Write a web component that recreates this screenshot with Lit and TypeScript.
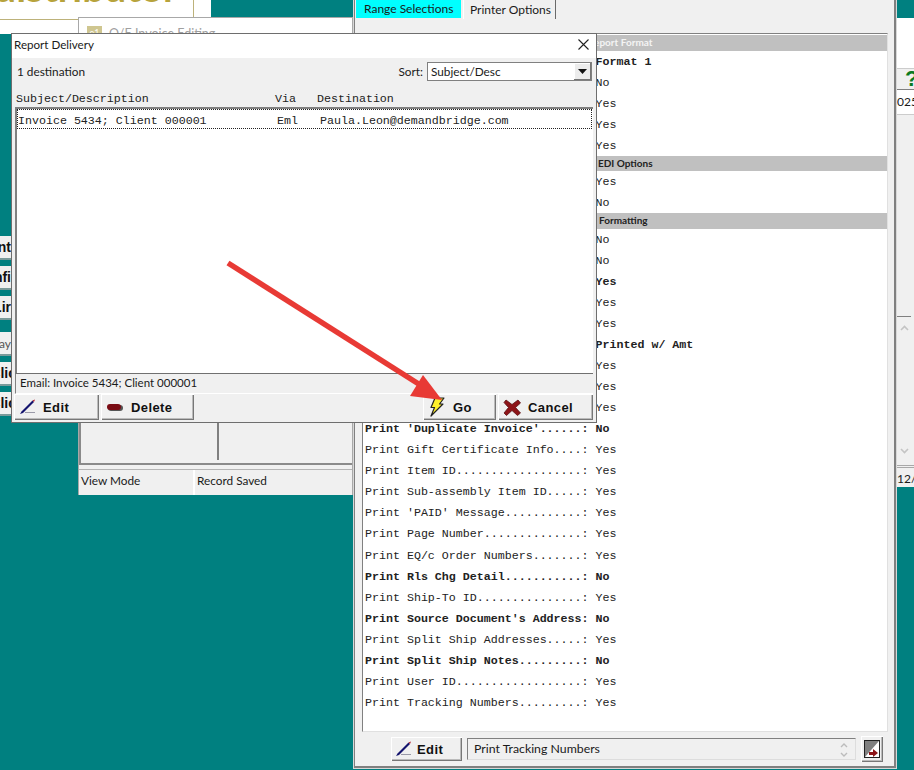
import { LitElement, html, css, svg } from "lit";
import { customElement } from "lit/decorators.js";

const pencil = html`<svg width="20" height="18" viewBox="0 0 20 18"><path d="M1 16 L4 15 L15 4 L13.5 2.5 L2.5 13.5 Z" fill="#14146e"/><path d="M13.5 2.5 L15 4 L16 1.5 Z" fill="#b02030"/><path d="M6 14.5 H16" stroke="#9a9aa8" stroke-width="1"/></svg>`;
const pill = html`<svg width="18" height="12" viewBox="0 0 18 12"><rect x="2" y="4" width="15" height="6" rx="3" fill="#555"/><rect x="1" y="3" width="14" height="6" rx="3" fill="#7a0c14"/></svg>`;
const bolt = html`<svg width="18" height="20" viewBox="0 0 18 20"><path d="M7 1 H16 L11.5 7 H15 L3 19 L6.5 10.5 H3 Z" fill="#fff02a" stroke="#222" stroke-width="1.2" stroke-linejoin="round"/></svg>`;
const cross = html`<svg width="18" height="17" viewBox="0 0 18 17"><path d="M3 1 L9 5.5 L15 1 L17.5 4 L12.5 8.5 L17.5 14 L14.5 16.5 L9 11.5 L3.5 16.5 L1 14 L5.5 8.5 L1 3.5 Z" fill="#8d1418" stroke="#5a1012" stroke-width=".8"/></svg>`;

type Row = [string, string, boolean?] | { head: string; cls: string };
const pad = (l: string) => l + ".".repeat(Math.max(0, 31 - l.length)) + ": ";
const rows: Row[] = [
  { head: "Report Format", cls: "h1" },
  ["Report Format.", "Format 1", true],
  ["Print Company Logo", "No"],
  ["Print Remit-To Address", "Yes"],
  ["Print Contact Name", "Yes"],
  ["Print Contact Phone", "Yes"],
  { head: "EDI Options", cls: "h2" },
  ["Include EDI Invoices", "Yes"],
  ["Send Via EDI", "No"],
  { head: "Formatting", cls: "h3" },
  ["Print Alt Item ID", "No"],
  ["Print Backorder Qty", "No"],
  ["Print Bill-To ID", "Yes", true],
  ["Print Comments", "Yes"],
  ["Print Customer PO", "Yes"],
  ["Print Discount", "Printed w/ Amt", true],
  ["Print Detail Notes", "Yes"],
  ["Print Document Notes", "Yes"],
  ["Print Due Date", "Yes"],
  ["Print 'Duplicate Invoice'", "No", true],
  ["Print Gift Certificate Info", "Yes"],
  ["Print Item ID", "Yes"],
  ["Print Sub-assembly Item ID", "Yes"],
  ["Print 'PAID' Message", "Yes"],
  ["Print Page Number", "Yes"],
  ["Print EQ/c Order Numbers", "Yes"],
  ["Print Rls Chg Detail", "No", true],
  ["Print Ship-To ID", "Yes"],
  ["Print Source Document's Address", "No", true],
  ["Print Split Ship Addresses", "Yes"],
  ["Print Split Ship Notes", "No", true],
  ["Print User ID", "Yes"],
  ["Print Tracking Numbers", "Yes"],
];

@customElement("app-root")
export class AppRoot extends LitElement {
  static styles = css`
    :host { display: block; width: 914px; height: 770px; position: relative; overflow: hidden; background: #008080; font-family: "Lato", "Noto Sans", sans-serif; font-size: 11.8px; color: #1a1a1a; }
    .abs { position: absolute; box-sizing: border-box; }
    .mono { font-family: "Liberation Mono", monospace; font-size: 11.65px; color: #222; white-space: pre; }
    .logo { left: 0; top: 0; width: 211px; height: 34px; background: #fff; overflow: hidden; }
    .logo-top { width: 194px; height: 20px; box-sizing: border-box; border-right: 1px solid #bdb27a; border-bottom: 1px solid #bdb27a; display: flex; align-items: flex-end; overflow: hidden; }
    .logo-text { font-family: "Lato", sans-serif; font-size: 39px; line-height: 40px; color: #b7a33c; margin: 0 0 12px -6px; white-space: nowrap; font-weight: 700; flex: none; }
    .stubs { left: 0; top: 236px; width: 11px; display: flex; flex-direction: column; }
    .stub { height: 22px; background: #f0f0f0; border-bottom: 2px solid #7a9a9a; display: flex; justify-content: flex-end; align-items: center; overflow: hidden; font: bold 14px "Liberation Sans", sans-serif; color: #111; box-sizing: content-box; margin-bottom: 6px; white-space: nowrap; }
    .stub.plain { font: 12px "Lato", sans-serif; color: #555; margin-top: 6px; }
    .stub span { flex: none; }
    .stub.cut span { margin-right: -5px; }
    .invoice { left: 78px; top: 17px; width: 275px; height: 478px; background: #f0f0f0; border: 1px solid #a8a8a8; border-bottom: 0; display: flex; flex-direction: column; }
    .inv-title { height: 28px; background: #fff; display: flex; align-items: center; gap: 7px; padding-left: 8px; color: #a0a0a0; font-size: 12.5px; padding-top: 2px; box-sizing: border-box; }
    .inv-icon { width: 15px; height: 15px; background: #cfc690; color: #fff; font-size: 9px; text-align: center; line-height: 13px; }
    .inv-body { flex: 1; border: 1px solid #8a8a8a; border-top: 0; border-width: 0 0 2px 2px; position: relative; }
    .inv-split { margin-left: 136px; margin-top: 377px; height: 37px; width: 2px; background: #808080; }
    .inv-status { height: 25px; margin-top: 4px; border-top: 1px solid #b4b4b4; display: grid; grid-template-columns: 114px 1fr; }
    .inv-status div { padding: 3px 2px; }
    .inv-status div + div { border-left: 2px solid #fff; padding-left: 2px; }
    .side { left: 896px; top: 18px; width: 18px; height: 469px; background: #fff; display: flex; flex-direction: column; border-left: 1px solid #8a8a8a; }
    .side-top { height: 50px; }
    .side-btn { height: 22px; box-sizing: border-box; background: #f0f0f0; border-top: 1px solid #ccc; border-bottom: 1px solid #808080; font: 900 22px "Liberation Sans", sans-serif; color: #0a7a20; padding-left: 8px; line-height: 20px; overflow: hidden; }
    .side-date { height: 24px; line-height: 24px; font-size: 12px; white-space: nowrap; }
    .side-pane { flex: 1; background: #f0f0f0; position: relative; border-top: 1px solid #ccc; }
    .side-line { margin-top: 201px; height: 1px; background: #808080; width: 14px; }
    .chev { position: absolute; left: 3px; }
    .side-foot { height: 22px; box-sizing: border-box; line-height: 22px; font-size: 12px; border-top: 3px double #a8a8a8; white-space: nowrap; background: #f0f0f0; overflow: hidden; }
    .report { left: 354px; top: 0; width: 542px; height: 768px; background: #f0f0f0; border: 2px solid #808080; border-width: 0 2px 2px 1px; padding: 0 6px 0 7px; display: flex; flex-direction: column; outline: 1px solid #d8d8d8; }
    .tabs { display: flex; height: 19px; margin-left: -6px; gap: 2px; flex: none; font-size: 12px; }
    .tab { padding: 0 8px; height: 18px; line-height: 18px; border-right: 1px solid #6a6a6a; box-sizing: border-box; white-space: nowrap; }
    .tab.on { background: #00ffff; width: 105px; border: 0; }
    .tab.off { width: 93px; border-left: 1px solid #fff; height: 19px; padding: 1px 0 0 6px; }
    .panel { flex: none; height: 699px; margin-top: 14px; background: #fff; border: 1px solid #808080; border-right-color: #e0e0e0; border-bottom-color: #e0e0e0; padding-top: 1px; box-sizing: border-box; }
    .phead { height: 15.5px; line-height: 15px; background: #c0c0c0; font-size: 10px; font-weight: 700; color: #222; white-space: nowrap; }
    .phead.h1 { color: #f4f4f4; padding-left: 225px; }
    .phead.h2 { padding-left: 235px; }
    .phead.h3 { padding-left: 236px; }
    .prow { height: 21.05px; line-height: 21.05px; padding-left: 2px; }
    .prow.b { font-weight: 700; }
    .foot { display: flex; align-items: center; margin-left: 29px; margin-top: 4px; gap: 5px; font-size: 12.3px; }
    .field { width: 389px; height: 22px; border: 1px solid #808080; border-right-color: #ddd; border-bottom-color: #ddd; box-sizing: border-box; line-height: 20px; padding-left: 6px; position: relative; }
    .spin { position: absolute; right: 6px; top: 2px; }
    .sq { width: 22px; height: 24px; box-sizing: border-box; padding: 3px; }
    .btn { display: flex; align-items: center; height: 26px; box-sizing: border-box; background: #f0f0f0; font: bold 13px "Liberation Sans", sans-serif; letter-spacing: .4px; color: #111; box-shadow: inset 1px 1px 0 #fff, inset -1px -1px 0 #777, inset -2px -2px 0 #bbb; }
    .dialog { left: 11px; top: 33px; width: 586px; height: 390px; background: #f0f0f0; border: 1px solid #6e6e6e; display: flex; flex-direction: column; }
    .dtitle { flex: none; height: 24px; box-sizing: border-box; padding: 0 7px 3px 2px; background: #fff; display: flex; align-items: center; justify-content: space-between; font-size: 11.6px; }
    .dbar { flex: none; height: 30px; box-sizing: border-box; padding: 0 4px 3px 5px; display: flex; align-items: center; justify-content: space-between; }
    .sort { display: flex; align-items: center; gap: 4px; }
    .select { width: 165px; height: 19px; background: #fff; border: 1px solid #808080; box-sizing: border-box; display: flex; justify-content: space-between; padding-left: 3px; line-height: 17px; }
    .arrow { width: 17px; background: #ececec; box-shadow: inset -1px -1px 0 #777, inset 1px 1px 0 #fff; display: flex; align-items: center; justify-content: center; }
    .cols { flex: none; height: 19px; line-height: 21px; padding-left: 4px; display: grid; grid-template-columns: 259px 42px 1fr; }
    .list { flex: 1; margin: 0 3px; background: #fff; border: 2px solid #808080; border-width: 2px 0 0 2px; min-height: 0; }
    .sel { height: 20px; line-height: 21px; border: 1px dotted #222; box-sizing: border-box; margin-right: 1px; display: grid; grid-template-columns: 259px 43px 1fr; }
    .dstatus { flex: none; height: 21px; box-sizing: border-box; line-height: 17px; border-top: 1px solid #707070; border-left: 1px solid #808080; margin: 0 3px; padding-left: 4px; border-bottom: 1px solid #fff; font-size: 11.5px; }
    .dbtns { flex: none; height: 28px; display: flex; padding: 0 3px 0 2px; gap: 3px; }
    .dbtns .btn { padding-left: 5px; }
    .spacer { flex: 1; }
    .arrowsvg { left: 0; top: 0; pointer-events: none; }
    .w-fedit { width: 71px; height: 24px; padding-left: 4px; }
    .w-edit { width: 85px; } .w-del { width: 93px; margin-left: -1px; } .w-go { width: 73px; } .w-can { width: 95px; margin-left: -1px; }
    .ml2 { margin-left: 2px; } .ml4 { margin-left: 4px; } .ml7 { margin-left: 7px; }
    .chev-up { top: 210px; } .chev-down { top: 333px; }
  `;

  render() {
    return html`
      <div class="abs logo"><div class="logo-top"><span class="logo-text">distributor</span></div></div>
      <div class="abs invoice">
        <div class="inv-title"><span class="inv-icon">e1</span><span>O/E Invoice Editing</span></div>
        <div class="inv-body"><div class="inv-split"></div></div>
        <div class="inv-status"><div>View Mode</div><div>Record Saved</div></div>
      </div>
      <div class="abs stubs">
        <div class="stub"><span>Print</span></div><div class="stub"><span>Confi</span></div><div class="stub"><span>Lir</span></div>
        <div class="stub plain"><span>Pay</span></div><div class="stub cut"><span>Clic</span></div><div class="stub cut"><span>Clic</span></div>
      </div>
      <div class="abs side">
        <div class="side-top"></div>
        <div class="side-btn">?</div>
        <div class="side-date">025</div>
        <div class="side-pane">
          <div class="side-line"></div>
          <svg class="chev chev-up" width="9" height="6" viewBox="0 0 9 6"><path d="M1 5 L4.5 1.5 L8 5" fill="none" stroke="#c4c4c4" stroke-width="1.6"/></svg>
          <svg class="chev chev-down" width="9" height="6" viewBox="0 0 9 6"><path d="M1 1 L4.5 4.5 L8 1" fill="none" stroke="#c4c4c4" stroke-width="1.6"/></svg>
        </div>
        <div class="side-foot">12/2</div>
      </div>
      <div class="abs report">
        <div class="tabs"><div class="tab on">Range Selections</div><div class="tab off">Printer Options</div></div>
        <div class="panel">
          ${rows.map((r) =>
            "head" in r
              ? html`<div class="phead ${r.cls}">${r.head}</div>`
              : html`<div class="prow mono ${r[2] ? "b" : ""}">${pad(r[0])}${r[1]}</div>`
          )}
        </div>
        <div class="foot">
          <div class="btn w-fedit">${pencil}<span class="ml2">Edit</span></div>
          <div class="field">Print Tracking Numbers
            <svg class="spin" width="10" height="18" viewBox="0 0 10 18"><path d="M2 6 L5 3 L8 6 M2 12 L5 15 L8 12" fill="none" stroke="#bcbcbc" stroke-width="1.4"/></svg>
          </div>
          <div class="btn sq"><svg width="16" height="18" viewBox="0 0 16 18"><rect x=".5" y=".5" width="15" height="17" fill="#fff" stroke="#222"/><path d="M1 17 V1 H15 Z" fill="#808080"/><path d="M5 12 H9 V9 L14 13 L9 17 V15 H5 Z" fill="#8d1418"/></svg></div>
        </div>
      </div>
      <div class="abs dialog">
        <div class="dtitle"><span>Report Delivery</span>
          <svg width="11" height="11" viewBox="0 0 11 11"><path d="M.5 .5 L10.5 10.5 M10.5 .5 L.5 10.5" stroke="#222" stroke-width="1.1"/></svg>
        </div>
        <div class="dbar"><span>1 destination</span>
          <div class="sort"><span>Sort:</span>
            <div class="select"><span>Subject/Desc</span><span class="arrow"><svg width="9" height="5" viewBox="0 0 9 5"><path d="M0 0 H9 L4.5 5 Z" fill="#111"/></svg></span></div>
          </div>
        </div>
        <div class="cols mono"><span>Subject/Description</span><span>Via</span><span>Destination</span></div>
        <div class="list"><div class="sel mono"><span>Invoice 5434; Client 000001</span><span>Eml</span><span>Paula.Leon@demandbridge.com</span></div></div>
        <div class="dstatus">Email: Invoice 5434; Client 000001</div>
        <div class="dbtns">
          <div class="btn w-edit">${pencil}<span class="ml4">Edit</span></div>
          <div class="btn w-del">${pill}<span class="ml7">Delete</span></div>
          <div class="spacer"></div>
          <div class="btn w-go">${bolt}<span class="ml7">Go</span></div>
          <div class="btn w-can">${cross}<span class="ml7">Cancel</span></div>
        </div>
      </div>
      <svg class="abs arrowsvg" width="914" height="770" viewBox="0 0 914 770">
        ${svg`<path d="M228 263 L425 388" stroke="#e83a35" stroke-width="5.5" fill="none"/><path d="M423 375 L410 396 L442 400 Z" fill="#e83a35"/>`}
      </svg>
    `;
  }
}
